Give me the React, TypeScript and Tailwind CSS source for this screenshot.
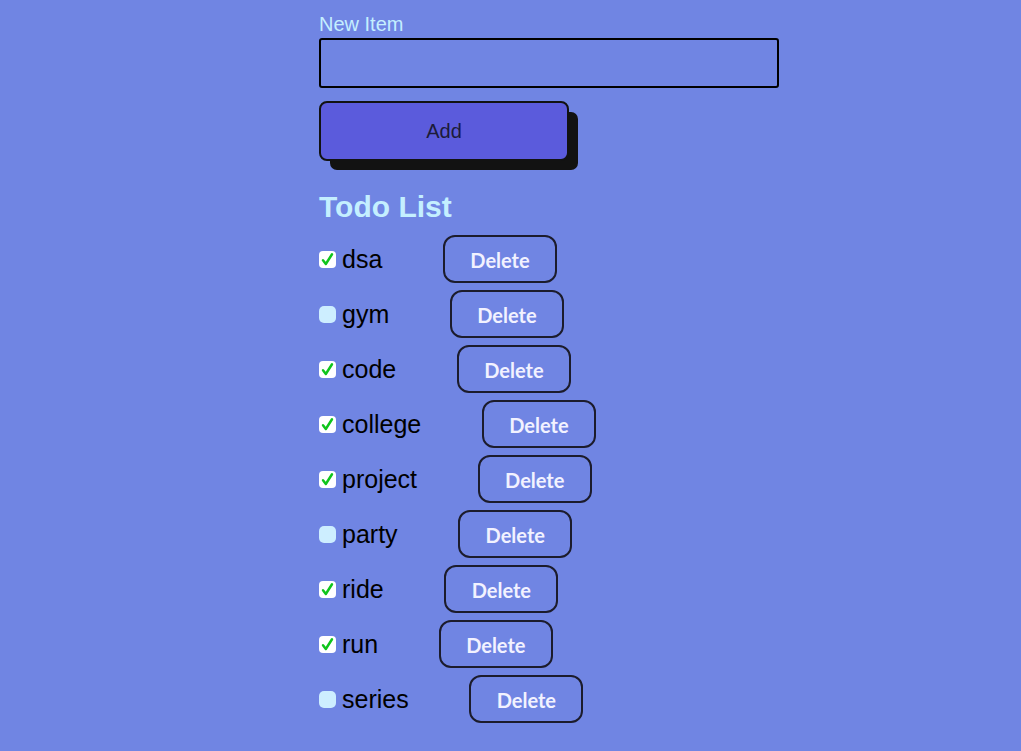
import { useState } from "react";

type Todo = {
  id: number;
  text: string;
  done: boolean;
};

const initialTodos: Todo[] = [
  { id: 1, text: "dsa", done: true },
  { id: 2, text: "gym", done: false },
  { id: 3, text: "code", done: true },
  { id: 4, text: "college", done: true },
  { id: 5, text: "project", done: true },
  { id: 6, text: "party", done: false },
  { id: 7, text: "ride", done: true },
  { id: 8, text: "run", done: true },
  { id: 9, text: "series", done: false },
];

function Check({ checked, onToggle }: { checked: boolean; onToggle: () => void }) {
  return (
    <button
      type="button"
      onClick={onToggle}
      className={
        checked
          ? "flex h-[17px] w-[17px] shrink-0 items-center justify-center rounded-[4px] bg-white"
          : "flex h-[17px] w-[17px] shrink-0 items-center justify-center rounded-[5px] bg-[#cdeeff]"
      }
    >
      {checked && (
        <svg viewBox="0 0 16 16" className="h-[15px] w-[15px]">
          <path
            d="M3.2 8.8 L6.2 12.8 L12.8 2.4"
            fill="none"
            stroke="#0fc51c"
            strokeWidth="2.6"
            strokeLinecap="round"
            strokeLinejoin="round"
          />
        </svg>
      )}
    </button>
  );
}

export default function App() {
  const [todos, setTodos] = useState<Todo[]>(initialTodos);
  const [value, setValue] = useState("");

  const addTodo = () => {
    if (!value.trim()) return;
    setTodos([...todos, { id: Date.now(), text: value.trim(), done: false }]);
    setValue("");
  };

  return (
    <div className="min-h-screen bg-[#7085e3] pl-[319px] pt-[13px] font-['Liberation_Sans',Arial,sans-serif]">
      <div className="flex w-[460px] flex-col">
        <label className="text-[20px] leading-[23px] text-[#c4efff]">New Item</label>
        <input
          value={value}
          onChange={(e) => setValue(e.target.value)}
          className="mt-[2px] h-[50px] w-full rounded-[3px] border-2 border-black bg-transparent px-2 text-[20px] outline-none"
        />
        <button
          type="button"
          onClick={addTodo}
          className="mt-[13px] h-[60px] w-[250px] rounded-[8px] border-2 border-[#121212] bg-[#5b5bdc] text-[20px] text-[#1c1c3a] shadow-[10px_10px_0_-1px_#121212]"
        >
          Add
        </button>

        <h1 className="mt-[28px] text-[30px] font-bold leading-[35px] text-[#c4efff]">Todo List</h1>

        <ul className="mt-[11px] flex flex-col gap-[7px]">
          {todos.map((todo) => (
            <li key={todo.id} className="flex h-[48px] items-center">
              <Check
                checked={todo.done}
                onToggle={() =>
                  setTodos(todos.map((t) => (t.id === todo.id ? { ...t, done: !t.done } : t)))
                }
              />
              <span className="ml-[6px] text-[25px] leading-none text-black">{todo.text}</span>
              <button
                type="button"
                onClick={() => setTodos(todos.filter((t) => t.id !== todo.id))}
                className="ml-[60.7px] h-[48px] w-[114px] rounded-[12px] border-2 border-[#1c1c2c] pt-[2px] font-['Lato',sans-serif] text-[20px] font-bold text-[#f2f2ff]"
              >
                Delete
              </button>
            </li>
          ))}
        </ul>
      </div>
    </div>
  );
}
